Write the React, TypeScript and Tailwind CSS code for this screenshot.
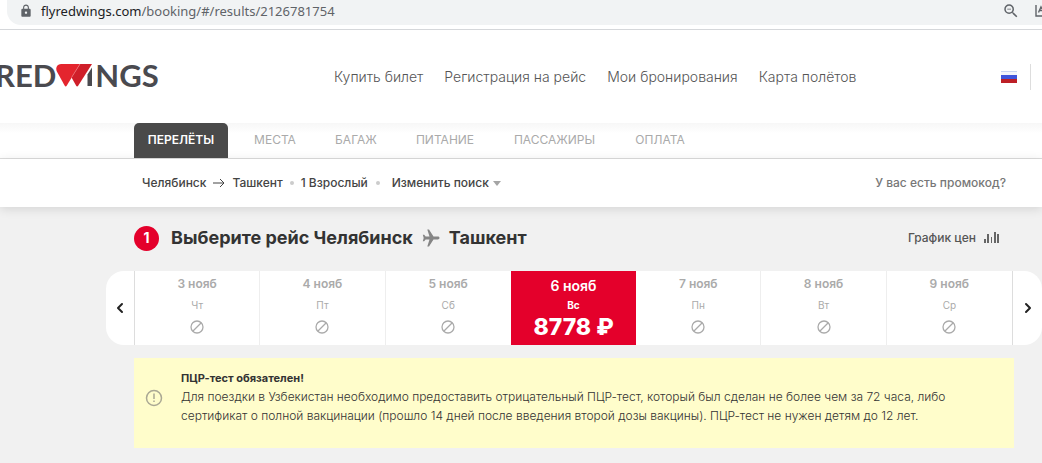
import { ChevronLeft, ChevronRight } from "lucide-react";
import { MdLock, MdOutlineZoomOut } from "react-icons/md";

const NAV = ["Купить билет", "Регистрация на рейс", "Мои бронирования", "Карта полётов"];

const STEPS = [
  { label: "ПЕРЕЛЁТЫ", width: "w-[94px]" },
  { label: "МЕСТА", width: "w-[68px]" },
  { label: "БАГАЖ", width: "w-[68px]" },
  { label: "ПИТАНИЕ", width: "w-[84px]" },
  { label: "ПАССАЖИРЫ", width: "w-[109px]" },
  { label: "ОПЛАТА", width: "w-[76px]" },
];

const DAYS = [
  { date: "3 нояб", weekday: "Чт" },
  { date: "4 нояб", weekday: "Пт" },
  { date: "5 нояб", weekday: "Сб" },
  { date: "6 нояб", weekday: "Вс", price: "8778 ₽" },
  { date: "7 нояб", weekday: "Пн" },
  { date: "8 нояб", weekday: "Вт" },
  { date: "9 нояб", weekday: "Ср" },
];

function AddressBar() {
  return (
    <div className="h-[30px] border-b border-[#d5d7da] bg-white pl-[7px]">
      <div className="flex h-[25px] items-center rounded-bl-[14px] bg-[#f1f3f4] pb-[3px] pl-3">
        <MdLock className="size-3.5 shrink-0 text-[#5f6368]" />
        <div className="ml-2 flex-1 font-['Noto_Sans',sans-serif] text-[13px] leading-5 text-[#5f6368]">
          <span className="text-[#202124]">flyredwings.com</span>/booking/#/results/2126781754
        </div>
        <button type="button" aria-label="Масштаб" className="mr-[15px] text-[#5f6368]">
          <MdOutlineZoomOut className="size-[18px]" />
        </button>
        <svg viewBox="0 0 7 12" className="h-3 w-[7px] text-[#5f6368]" fill="none" stroke="currentColor">
          <path d="M1 0v11h6M3.500 7.500 6 2l1 2M4.500 5.500H7" strokeWidth="1.400" />
        </svg>
      </div>
    </div>
  );
}

function Logo() {
  return (
    <a
      href="#"
      aria-label="Red Wings"
      className="-ml-[5px] flex w-[164px] items-start pb-[3px] font-['Lato',sans-serif] text-[31px] leading-7 font-bold text-[#4a4a4f]"
    >
      <span>RED</span>
      <svg viewBox="0 0 37 23" className="mt-[3px] h-[23px] w-[37px] shrink-0">
        <path d="M5 0H24L10.500 22Q9.500 23 8.600 21.500L0.600 7Q-1 1 5 0Z" fill="#e4252e" />
        <path d="M24 0H36L22 22Q21 23 20 21.500L15.500 13.500Z" fill="#cf1f2a" />
        <path d="M24 0 15.500 13.500" stroke="#f07a80" strokeWidth=".7" />
        <path d="M36 3.500V22H31.500V10.500Z" fill="#4a4a4f" />
      </svg>
      <span className="ml-0.5">NGS</span>
    </a>
  );
}

function Header() {
  return (
    <header className="flex h-[93px] items-center bg-white">
      <Logo />
      <nav className="ml-[175px] flex flex-1 gap-[21px] text-sm font-light whitespace-nowrap text-[#555]">
        {NAV.map((item) => (
          <a key={item} href="#">
            {item}
          </a>
        ))}
      </nav>
      <div className="mr-[11px] flex h-[26px] items-center border-r border-[#ddd] pr-[13px]">
        <button type="button" aria-label="Русский">
          <svg viewBox="0 0 16 12" className="h-3 w-4">
            <path d="M0 0h16v4H0z" fill="#f4f6fb" />
            <path d="M0 0h16v1H0z" fill="#c9d5f2" />
            <path d="M0 4h16v4H0z" fill="#3f55dc" />
            <path d="M0 8h16v4H0z" fill="#bd1f26" />
          </svg>
        </button>
      </div>
    </header>
  );
}

function Steps() {
  return (
    <div className="flex h-9 border-b border-[#ddd] bg-linear-to-b from-[#f7f7f7] to-white to-30% pl-[134px]">
      <div className="flex gap-[13px]">
        {STEPS.map((step, i) => (
          <button
            key={step.label}
            type="button"
            className={`${step.width} rounded-t-[5px] pb-0.5 text-center text-xs whitespace-nowrap ${
              i === 0 ? "bg-[#4a4a4a] font-semibold text-white" : "text-[#aaa]"
            }`}
          >
            {step.label}
          </button>
        ))}
      </div>
    </div>
  );
}

function SearchSummary() {
  return (
    <div className="flex h-12 items-center bg-white pr-9 pl-[142px] text-xs font-medium whitespace-nowrap text-[#444] shadow-[0_2px_10px_rgba(0,0,0,0.12)]">
      <span>Челябинск</span>
      <svg viewBox="0 0 12 10" className="mx-[7px] h-2.5 w-3" fill="none" stroke="currentColor">
        <path d="M0 5h11M7 1l4 4-4 4" />
      </svg>
      <span>Ташкент</span>
      <span className="mx-[7px] size-1 rounded-full bg-[#ccc]" />
      <span>1 Взрослый</span>
      <span className="mr-3 ml-2 size-1 rounded-full bg-[#ccc]" />
      <button type="button" className="flex items-center">
        Изменить поиск
        <svg viewBox="0 0 8 5" className="ml-1 h-[5px] w-2">
          <path d="M0 0h8L4 5z" fill="#a5a5a5" />
        </svg>
      </button>
      <a href="#" className="ml-auto text-[#777]">
        У вас есть промокод?
      </a>
    </div>
  );
}

function Title() {
  return (
    <div className="flex h-16 items-center pr-[15px] pb-0.5">
      <span className="flex size-[25px] items-center justify-center rounded-full bg-[#e4002b] text-sm font-bold text-white">
        1
      </span>
      <h1 className="ml-3 flex items-center text-lg font-bold text-[#333]">
        Выберите рейс Челябинск
        <svg viewBox="0 0 18 18" className="mx-[9px] size-[18px]" fill="#858585">
          <path d="M17.500 9c0-.9-.8-1.400-1.700-1.400h-4.300L7 .6H5.300l2.200 7H3.600L2.200 5.800H.8L1.700 9l-.9 3.200h1.400l1.400-1.800h3.900l-2.200 7H7l4.500-7h4.300c.9 0 1.700-.5 1.700-1.400z" />
        </svg>
        Ташкент
      </h1>
      <button type="button" className="ml-auto flex items-center gap-2 text-xs font-medium text-[#555]">
        График цен
        <svg viewBox="0 0 15 12" className="h-3 w-[15px]" fill="#666">
          <path d="M0 7h2v4H0zM3 2h2v9H3zM7 5h1v6H7zM10 0h2v11h-2zM13 2h2v9h-2z" />
        </svg>
      </button>
    </div>
  );
}

function PriceCalendar() {
  return (
    <div className="-mx-7 flex h-[74px] overflow-hidden rounded-[18px] bg-white">
      <button type="button" aria-label="Назад" className="flex w-7 items-center justify-center text-[#222]">
        <ChevronLeft className="size-4" strokeWidth={3} />
      </button>
      <div className="grid flex-1 grid-cols-7 border-x border-[#ddd]">
        {DAYS.map((day, i) =>
          day.price ? (
            <button
              key={day.date}
              type="button"
              className="flex flex-col items-center bg-[#e4002b] pt-1 font-bold text-white"
            >
              <span className="text-sm leading-[22px] font-semibold">{day.date}</span>
              <span className="text-[10px] leading-4">{day.weekday}</span>
              <span className="text-[23px] leading-7 font-extrabold">{day.price}</span>
            </button>
          ) : (
            <button
              key={day.date}
              type="button"
              className={`flex flex-col items-center pt-1 text-[#aaa] ${
                i === 2 || i === 6 ? "" : "border-r border-[#eee]"
              }`}
            >
              <span className="text-xs leading-[18px] font-semibold">{day.date}</span>
              <span className="mt-1 text-[10px] leading-4">{day.weekday}</span>
              <svg viewBox="0 0 14 14" className="mt-[7px] size-3.5" fill="none" stroke="#aaa" strokeWidth="1.300">
                <circle cx="7" cy="7" r="6" />
                <path d="M3 11l8-8" />
              </svg>
            </button>
          )
        )}
      </div>
      <button type="button" aria-label="Вперёд" className="flex w-[29px] items-center justify-center text-[#222]">
        <ChevronRight className="size-4" strokeWidth={3} />
      </button>
    </div>
  );
}

function Notice() {
  return (
    <div className="mt-[13px] flex bg-[#fffdcb] pt-[11px] pb-[23px] text-[#333]">
      <svg viewBox="0 0 18 18" className="mt-5 ml-[11px] size-[18px] shrink-0" fill="none" stroke="#aaa894">
        <circle cx="9" cy="9" r="7.500" strokeWidth="1.500" />
        <path d="M9 4.500v5.500M9 11.500v1.500" strokeWidth="1.500" />
      </svg>
      <div className="ml-[18px] pr-12">
        <p className="text-[11px] leading-[18px] font-bold">ПЦР-тест обязателен!</p>
        <p className="text-xs leading-[19px] font-light">
          Для поездки в Узбекистан необходимо предоставить отрицательный ПЦР-тест, который был сделан не более чем за 72
          часа, либо сертификат о полной вакцинации (прошло 14 дней после введения второй дозы вакцины). ПЦР-тест не
          нужен детям до 12 лет.
        </p>
      </div>
    </div>
  );
}

export default function App() {
  return (
    <div className="min-h-screen overflow-hidden bg-[#f1f1f1] font-['Inter',sans-serif]">
      <AddressBar />
      <Header />
      <Steps />
      <SearchSummary />
      <main className="pr-7 pl-[134px]">
        <Title />
        <PriceCalendar />
        <Notice />
      </main>
    </div>
  );
}
